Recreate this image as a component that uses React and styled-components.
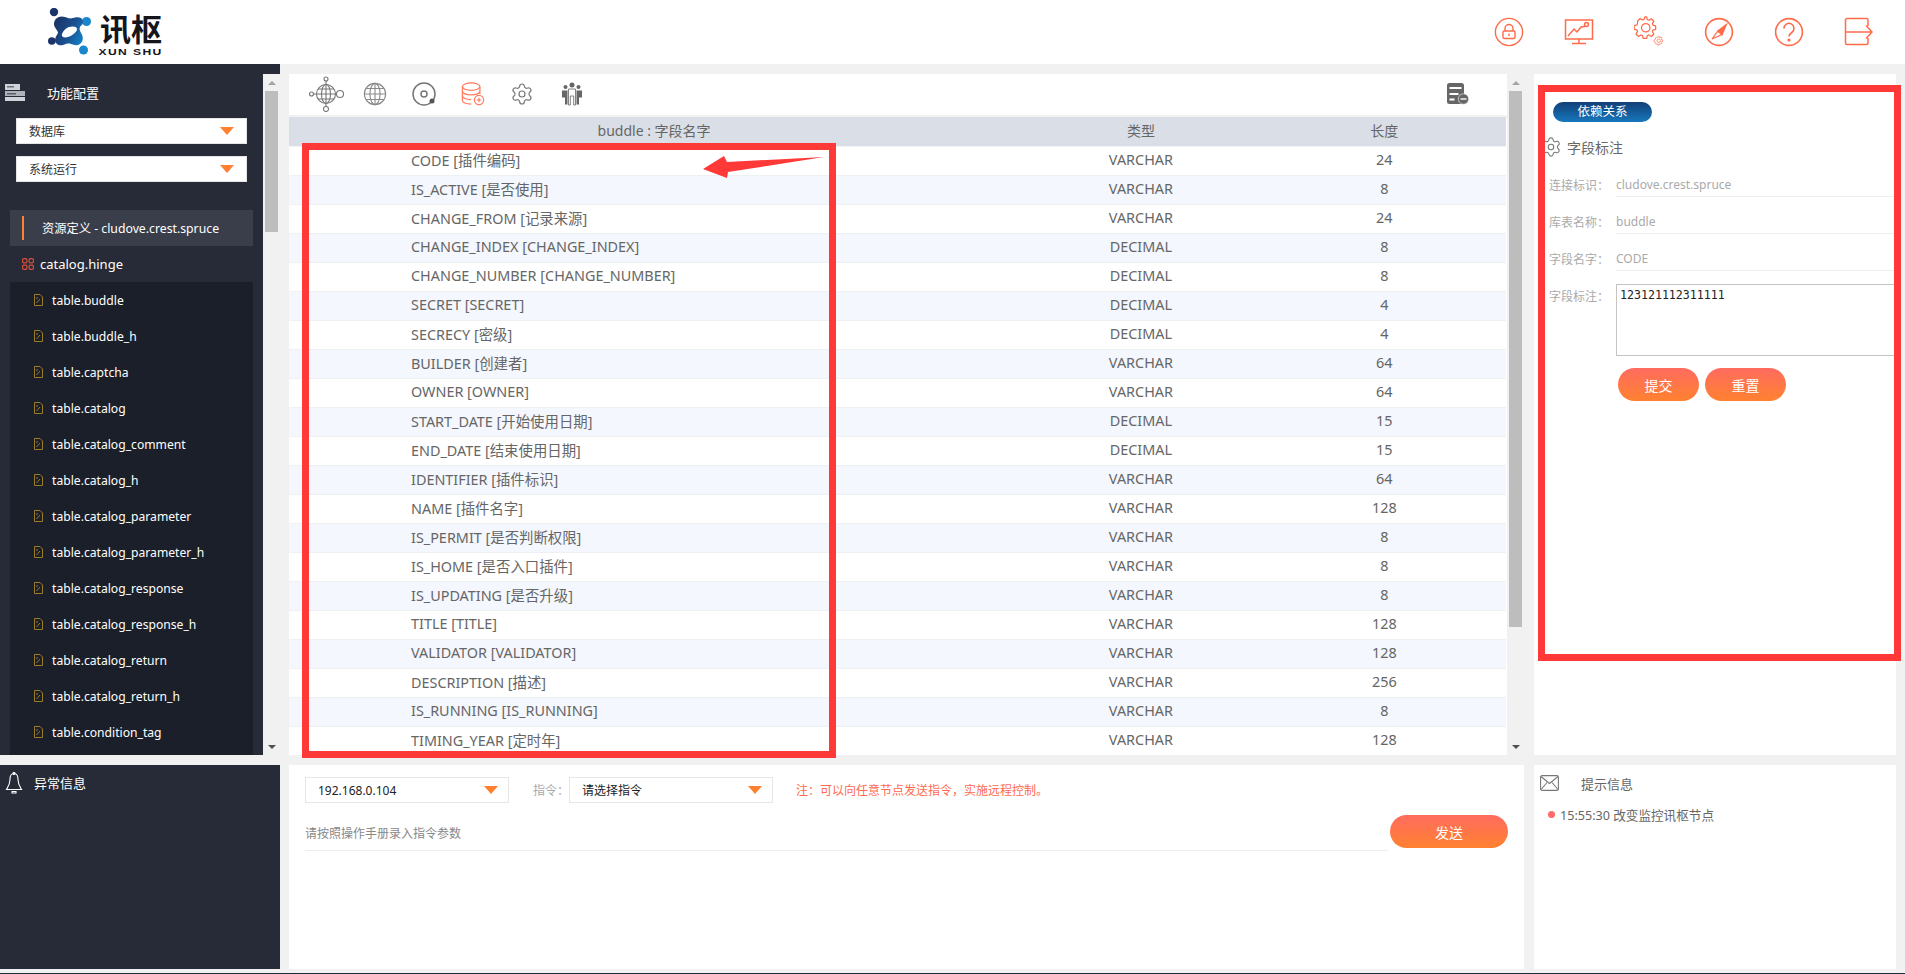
import React from "react"
import styled, { createGlobalStyle } from "styled-components"
import { Settings } from "lucide-react"

const FONT = `"Noto Sans", "Noto Sans CJK SC", sans-serif`

const GlobalStyle = createGlobalStyle`
  html, body {
    margin: 0;
    padding: 0;
    background: #f1f1f1;
    font-family: ${FONT};
    overflow: hidden;
  }
  * { box-sizing: border-box; }
`

const Page = styled.div`
  position: relative;
  width: 1905px;
  height: 974px;
  display: flex;
  flex-direction: column;
  background: #f1f1f1;
  overflow: hidden;
`

const Header = styled.header`
  height: 64px;
  flex: none;
  background: #fff;
  display: flex;
  align-items: center;
  justify-content: space-between;
  padding: 0 31px 0 48px;
`

const Logo = styled.div`
  display: flex;
  align-items: center;
  gap: 8px;
`

const LogoWords = styled.div`
  display: flex;
  flex-direction: column;
  align-items: center;
  color: #15151c;
  line-height: 1;
  margin-top: 5px;
`

const LogoCn = styled.span`
  font-size: 31px;
  font-weight: 700;
  height: 33px;
  line-height: 33px;
`

const LogoEn = styled.span`
  display: inline-block;
  font-family: "Liberation Sans", sans-serif;
  font-size: 8.5px;
  font-weight: 700;
  letter-spacing: 1px;
  white-space: nowrap;
  margin-top: 2px;
  transform: scaleX(1.42);
`

const HeaderIcons = styled.nav`
  display: flex;
  align-items: center;
  gap: 40px;
  svg { display: block; }
`

const Workspace = styled.div`
  flex: none;
  display: grid;
  grid-template-columns: 280px 1245px 371px;
  grid-template-rows: 691px 204px;
  row-gap: 10px;
  width: 1905px;
`

const Sidebar = styled.aside`
  background: #272b37;
  display: flex;
  height: 691px;
`

const SideBody = styled.div`
  width: 263px;
  display: flex;
  flex-direction: column;
  overflow: hidden;
`

const SideTitle = styled.div`
  height: 54px;
  padding: 2px 0 0 5px;
  display: flex;
  align-items: center;
  color: #fff;
  font-size: 13px;
  span { margin-left: 22px; }
`

const SideSelect = styled.div`
  height: 26px;
  margin: 0 16px 12px;
  background: #fff;
  border: 1px solid #e5e5e5;
  color: #333;
  font-size: 12px;
  display: flex;
  align-items: center;
  justify-content: space-between;
  padding: 0 12px;
`

const Caret = styled.i`
  display: block;
  width: 0;
  height: 0;
  border-left: 7.5px solid transparent;
  border-right: 7.5px solid transparent;
  border-top: 8px solid #ff8030;
`

const ActiveRow = styled.div`
  height: 36px;
  margin: 16px 10px 0;
  background: #3a3e4b;
  color: #fff;
  font-size: 12.25px;
  display: flex;
  align-items: center;
  padding-left: 12px;
  white-space: nowrap;
  &::before {
    content: "";
    width: 2px;
    height: 24px;
    background: #ff8030;
    margin-right: 18px;
  }
`

const GroupRow = styled.div`
  height: 36px;
  margin: 0 10px;
  padding-left: 12px;
  display: flex;
  align-items: center;
  gap: 6px;
  color: #fff;
  font-size: 13px;
`

const TreeList = styled.ul`
  flex: 1;
  margin: 0 10px;
  padding: 0 0 0 24px;
  list-style: none;
  background: #1b1f29;
`

const TreeItem = styled.li`
  height: 36px;
  display: flex;
  align-items: center;
  gap: 9px;
  color: #fff;
  font-size: 12.15px;
  white-space: nowrap;
`

const Track = styled.div`
  flex: none;
  width: 17px;
  margin-top: ${p => p.$top || 0}px;
  background: #f1f1f1;
  display: flex;
  flex-direction: column;
  align-items: center;
`

const ArrowBox = styled.div`
  height: 17px;
  flex: none;
  display: flex;
  align-items: center;
  justify-content: center;
  &::before {
    content: "";
    border-left: 4px solid transparent;
    border-right: 4px solid transparent;
    ${p => p.$down
      ? "border-top: 4px solid #505050;"
      : "border-bottom: 4px solid #a3a3a3;"}
  }
`

const Thumb = styled.div`
  width: 13px;
  height: ${p => p.$h}px;
  flex: none;
  background: #bdbdbd;
`

const Grow = styled.div`
  flex: 1;
`

const Scrollbar = ({ thumb, top }) => (
  <Track $top={top}>
    <ArrowBox />
    <Thumb $h={thumb} />
    <Grow />
    <ArrowBox $down />
  </Track>
)

const MainCol = styled.section`
  padding: 10px 0 0 9px;
  height: 691px;
  display: flex;
`

const MainBody = styled.div`
  width: 1218px;
  background: #fff;
  display: flex;
  flex-direction: column;
  overflow: hidden;
`

const Toolbar = styled.div`
  height: 43px;
  flex: none;
  display: flex;
  align-items: center;
  padding: 0 24px 2px 12px;
  background: #fff;
  border-bottom: 2px solid #f1f1f1;
`

const ToolSlot = styled.div`
  width: 49.2px;
  display: flex;
  justify-content: center;
  svg { display: block; }
  &:last-child { margin-left: auto; }
`

const FieldTable = styled.table`
  width: 1217px;
  border-collapse: collapse;
  table-layout: fixed;
  font-size: 14.4px;
  color: #666;
  th {
    height: 29px;
    background: #d9dee7;
    border-bottom: 1px solid #f1f3f7;
    font-weight: 400;
    font-size: 14px;
    color: #666;
    padding: 0 0 2px;
    width: 20%;
  }
  th:first-child { width: 60%; }
  td {
    height: 29px;
    padding: 0 0 2px;
    text-align: center;
    border-bottom: 1px solid #eef0f4;
    white-space: nowrap;
  }
  td:first-child { text-align: left; padding-left: 122px; }
  tbody tr:nth-child(even) { background: #f4f7fd; }
`

const RightCol = styled.section`
  margin-top: 10px;
  margin-left: 9px;
  background: #fff;
  padding: 28px 0 0 15px;
  height: 681px;
  width: 362px;
  overflow: hidden;
`

const DepTag = styled.div`
  width: 99px;
  height: 20px;
  border-radius: 10px;
  background: linear-gradient(180deg, #123f78, #1778bd);
  color: #fff;
  font-size: 12.5px;
  line-height: 20px;
  text-align: center;
  margin-left: 4px;
`

const NoteTitle = styled.div`
  display: flex;
  align-items: center;
  gap: 5px;
  height: 24px;
  margin: 13px 0 8px -9px;
  font-size: 14px;
  color: #666;
  svg { display: block; }
`

const FormRow = styled.div`
  display: flex;
  height: 37px;
  font-size: 12px;
  color: #aaa;
`

const FormLabel = styled.div`
  width: 67px;
  flex: none;
  padding-top: 9px;
  white-space: nowrap;
`

const FormValue = styled.div`
  flex: 1;
  height: 30px;
  padding-top: 9px;
  margin-right: -10px;
  border-bottom: 1px solid #eeeeee;
`

const NoteBox = styled.div`
  flex: 1;
  height: 72px;
  margin: 6px -10px 0 0;
  padding: 3px 0 0 3px;
  border: 1px solid #c4c4c4;
  font-family: "DejaVu Sans Mono", monospace;
  font-size: 11.6px;
  color: #222;
`

const FormButtons = styled.div`
  display: flex;
  gap: 6px;
  margin: 53px 0 0 69px;
`

const PillButton = styled.button`
  width: ${p => p.$w || 81}px;
  height: 33px;
  flex: none;
  border: 0;
  padding: 0;
  border-radius: 17px;
  background: linear-gradient(180deg, #ff6c60, #ff8130);
  color: #fff;
  font-family: ${FONT};
  font-size: 14px;
`

const AlertPanel = styled.div`
  background: #272b37;
  color: #fff;
  font-size: 13px;
  display: flex;
  align-items: flex-start;
  gap: 11px;
  padding: 7px 0 0 5px;
  span { line-height: 22px; }
`

const CommandPanel = styled.div`
  margin-left: 9px;
  width: 1235px;
  background: #fff;
  padding: 12px 16px 0;
`

const CommandRow = styled.div`
  display: flex;
  align-items: center;
  height: 26px;
`

const CmdSelect = styled.div`
  width: 204px;
  height: 26px;
  border: 1px solid #e6e6e6;
  background: #fff;
  color: #222;
  font-size: 12px;
  display: flex;
  align-items: center;
  justify-content: space-between;
  padding: 0 10px 0 12px;
`

const CmdLabel = styled.span`
  color: #aaa;
  font-size: 12px;
  width: 36px;
  margin-left: 24px;
  white-space: nowrap;
`

const CmdNote = styled.span`
  color: #ff6a50;
  font-size: 12px;
  margin-left: 23px;
`

const CommandInput = styled.div`
  display: flex;
  align-items: flex-start;
  gap: 2px;
  margin-top: 12px;
`

const ParamLine = styled.div`
  width: 1083px;
  height: 36px;
  padding-top: 9px;
  border-bottom: 1px solid #eeeeee;
  color: #888;
  font-size: 12px;
`

const TipPanel = styled.div`
  margin-left: 9px;
  width: 362px;
  background: #fff;
  padding: 7px 0 0 6px;
  color: #666;
`

const TipTitle = styled.div`
  display: flex;
  align-items: center;
  gap: 22px;
  height: 22px;
  font-size: 13px;
`

const TipLine = styled.div`
  display: flex;
  align-items: center;
  gap: 5px;
  margin: 11px 0 0 8px;
  font-size: 12.6px;
  &::before {
    content: "";
    width: 7px;
    height: 7px;
    border-radius: 50%;
    background: #ff6b6b;
  }
`

const BottomEdge = styled.div`
  position: absolute;
  left: 0;
  right: 0;
  bottom: 0;
  height: 1px;
  background: #1e2b3a;
`

// the red marks drawn on top of the screenshot
const RedFrame = styled.div`
  position: absolute;
  left: ${p => p.$x}px;
  top: ${p => p.$y}px;
  width: ${p => p.$w}px;
  height: ${p => p.$h}px;
  border: 7px solid #ff3838;
  pointer-events: none;
`

const RedArrow = styled.svg`
  position: absolute;
  left: 700px;
  top: 150px;
`

const O = "#ff6b4a"

const LogoMark = () => (
  <svg width="44" height="48" viewBox="0 0 44 48">
    <defs>
      <linearGradient id="lg" x1="0" y1="0.25" x2="1" y2="0.75">
        <stop offset="0" stopColor="#1b3468" />
        <stop offset="0.55" stopColor="#1a4f8e" />
        <stop offset="1" stopColor="#1280c6" />
      </linearGradient>
    </defs>
    <circle cx="6" cy="4" r="4.2" fill="#1c3468" />
    <circle cx="3.800" cy="33" r="3.800" fill="#1c3468" />
    <circle cx="38.500" cy="13.500" r="4.500" fill="#1a86cb" />
    <circle cx="35.500" cy="42" r="4.500" fill="#1a86cb" />
    <path
      fill="url(#lg)"
      fillRule="evenodd"
      d="M6 16c0-6 6-9 11-7 3 1 5 2 8 1 3-1 9-2 10 3 1 3-2 4-3 6-1 2 0 4 1 6 3 4 2 9-1 11-3 2-6 1-9 0-3-1-5 0-8 1-4 1-8-1-8-5 0-3 2-5 3-7 0-3-4-5-4-9zM14 26c-1 3 2 4 6 3 4-1 9-5 9-8 0-3-5-3-8-2-3 1-6 4-7 7z"
    />
  </svg>
)

const Lock = () => (
  <svg width="30" height="30" viewBox="0 0 30 30" fill="none" stroke={O} strokeWidth="1.4">
    <circle cx="15" cy="15" r="13.6" />
    <rect x="9" y="14" width="12" height="7.5" rx="1.2" />
    <path d="M11 14v-2.5a4 4 0 0 1 8 0V14M15 16.5v2.5" />
  </svg>
)

const Monitor = () => (
  <svg width="30" height="30" viewBox="0 0 30 30" fill="none" stroke={O} strokeWidth="1.5">
    <rect x="1.500" y="3" width="27" height="19" />
    <path d="M15 22v4.500M8 26.500h14" />
    <path d="M4 19l6-7 3 3 4-5 3.500-.5 2.500-2" />
    <circle cx="22.500" cy="7.500" r="2" fill="#fff" />
  </svg>
)

const GearPath = "M12.9 1h2.2l.7 3.2 2 .8 2.8-1.8 3 3-1.8 2.8.8 2 3.2.7v4.2l-3.2.7-.8 2 1.8 2.8-3 3-2.8-1.8-2 .8-.7 3.2h-4.2l-.7-3.2-2-.8-2.8 1.8-3-3 1.8-2.8-.8-2-3.2-.7V11.4l3.2-.7.8-2L4.300 5.900l3-3 2.800 1.800 2-.8z"

const SettingsGear = () => (
  <svg width="30" height="32" viewBox="0 0 30 32" fill="none" stroke={O} strokeLinejoin="round">
    <g transform="scale(0.84)">
      <path d={GearPath} strokeWidth="1.5" />
      <circle cx="14" cy="14" r="5" strokeWidth="1.5" />
    </g>
    <g transform="translate(20 20) scale(0.34)" opacity="0.8">
      <path d={GearPath} strokeWidth="2.5" />
      <circle cx="14" cy="14" r="5" strokeWidth="2.5" />
    </g>
  </svg>
)

const Compass = () => (
  <svg width="30" height="30" viewBox="0 0 30 30" fill="none" stroke={O} strokeWidth="1.6">
    <circle cx="15" cy="15" r="13.4" />
    <path d="M22 8l-4 9.500-4-3.500z" fill={O} />
    <path d="M8 22l6-8 4 3.500z" strokeWidth="1.2" />
  </svg>
)

const Question = () => (
  <svg width="30" height="30" viewBox="0 0 30 30" fill="none" stroke={O} strokeWidth="1.6">
    <circle cx="15" cy="15" r="13.4" />
    <path d="M10 11.500a5 5 0 1 1 7.800 4c-1.800 1.200-2.800 2-2.800 4" />
    <circle cx="15" cy="23" r="0.8" fill={O} />
  </svg>
)

const Exit = () => (
  <svg width="30" height="30" viewBox="0 0 30 30" fill="none" stroke={O} strokeWidth="1.5">
    <path d="M24 9V3a1.500 1.500 0 0 0-1.500-1.500H3A1.500 1.500 0 0 0 1.500 3v23A1.500 1.500 0 0 0 3 27.500h19.500A1.500 1.500 0 0 0 24 26v-5" />
    <path d="M1.500 15h26M22 8.500l6 6.500-6 6.500" />
  </svg>
)

const ServerIcon = () => (
  <svg width="20" height="17" viewBox="0 0 20 17">
    <rect x="0" y="0" width="15" height="6" fill="#cfd2d8" />
    <rect x="0" y="7" width="20" height="5" fill="#aeb2ba" />
    <rect x="0" y="13" width="20" height="4" fill="#cfd2d8" />
    <rect x="2" y="2" width="7" height="1.500" fill="#6c707a" />
    <rect x="2" y="9" width="9" height="1.500" fill="#5a5e68" />
  </svg>
)

const GridIcon = () => (
  <svg width="12" height="12" viewBox="0 0 12 12" fill="none" stroke="#d8503c" strokeWidth="1.200">
    <rect x="0.600" y="0.600" width="4.300" height="4.300" rx="1.200" />
    <rect x="7.100" y="0.600" width="4.300" height="4.300" rx="1.200" />
    <rect x="0.600" y="7.100" width="4.300" height="4.300" rx="1.200" />
    <rect x="7.100" y="7.100" width="4.300" height="4.300" rx="1.200" />
  </svg>
)

const FileIcon = () => (
  <svg width="9" height="12" viewBox="0 0 9 12" fill="none" stroke="#9a7b26" strokeWidth="1">
    <path d="M.5.5h5.500l2.500 2.500v8.500h-8z" />
    <path d="M2.500 9l3.500-4M2 4h2" />
  </svg>
)

const Bell = () => (
  <svg width="18" height="23" viewBox="0 0 18 23" fill="none" stroke="#fff" strokeWidth="1.100">
    <path d="M9 1.500c-3 0-4 3-4 6 0 5-1.500 7-3.500 10h15c-2-3-3.500-5-3.500-10 0-3-1-6-4-6z" />
    <path d="M7 19.500h4v1.500H7z" />
    <circle cx="9" cy="1.500" r="1" />
  </svg>
)

const Mail = () => (
  <svg width="19" height="16" viewBox="0 0 19 16" fill="none" stroke="#777" strokeWidth="1.100">
    <rect x="0.600" y="0.600" width="17.800" height="14.800" rx="1.500" />
    <path d="M1 1.500l8.500 7 8.500-7M1 14.500l6-7M18 14.500l-6-7" />
  </svg>
)

const G = "#777"

const NetIcon = () => (
  <svg width="36" height="36" viewBox="0 0 36 36" fill="none" stroke={G} strokeWidth="1.100">
    <circle cx="18" cy="18" r="9.500" />
    <ellipse cx="18" cy="18" rx="4.500" ry="9.500" />
    <path d="M18 8.500v19M8.500 18h19M10 13h16M10 23h16" />
    <circle cx="18" cy="3" r="2" />
    <circle cx="18" cy="33" r="2.500" />
    <circle cx="3.500" cy="18" r="2" />
    <circle cx="32" cy="18" r="3.500" />
    <path d="M18 5v3.500M18 27.500v3M5.500 18h3M27.500 18h1" />
  </svg>
)

const GlobeIcon = () => (
  <svg width="24" height="24" viewBox="0 0 26 26" fill="none" stroke="#8a8a8a" strokeWidth="1.200">
    <circle cx="13" cy="13" r="11.500" />
    <ellipse cx="13" cy="13" rx="5.500" ry="11.500" />
    <path d="M13 1.500v23M1.500 13h23M3.500 7h19M3.500 19h19" />
  </svg>
)

const DiskIcon = () => (
  <svg width="26" height="26" viewBox="0 0 26 26" fill="none" stroke={G} strokeWidth="1.500">
    <circle cx="13" cy="13" r="11" />
    <circle cx="13" cy="13" r="3" />
    <circle cx="21" cy="20" r="2.500" fill="#555" stroke="none" />
  </svg>
)

const DbIcon = () => (
  <svg width="24" height="24" viewBox="0 0 26 26" fill="none" stroke="#ff7a5c" strokeWidth="1.300">
    <ellipse cx="11" cy="5" rx="9.500" ry="4" />
    <path d="M1.500 5v15c0 2.200 4 4 9.500 4M20.500 5v8M1.500 10c0 2.200 4 4 9.500 4s9.500-1.800 9.500-4M1.500 15c0 2.200 4 4 9.500 4" />
    <circle cx="19.500" cy="19.500" r="5" fill="#fff" />
    <path d="M19.500 17v5M17 19.500h5" />
  </svg>
)

const PeopleIcon = () => (
  <svg width="20" height="24" viewBox="0 0 20 24" fill="#666">
    <circle cx="10" cy="3" r="2.500" />
    <circle cx="3.500" cy="5" r="2" />
    <circle cx="16.500" cy="5" r="2" />
    <path d="M0 8.500h5.500v14H3v-7H0zM20 8.500h-5.500v14H17v-7h3z" />
    <path d="M6.500 7h7v16h-1.800v-9h-3.400v9H6.500z" fill="#fff" stroke="#666" strokeWidth="0.800" />
  </svg>
)

const ListMinusIcon = () => (
  <svg width="22" height="22" viewBox="0 0 22 22">
    <rect x="0" y="0" width="17" height="21" rx="2.500" fill="#666" />
    <rect x="2.500" y="4" width="12" height="2" fill="#fff" />
    <rect x="2.500" y="10" width="9" height="2" fill="#fff" />
    <rect x="2.500" y="15.500" width="5" height="2" fill="#fff" />
    <circle cx="16.500" cy="16" r="5.200" fill="#666" stroke="#fff" strokeWidth="0.600" />
    <rect x="13.500" y="15.300" width="6" height="1.400" fill="#fff" />
  </svg>
)

const treeItems = [
  "table.buddle", "table.buddle_h", "table.captcha", "table.catalog",
  "table.catalog_comment", "table.catalog_h", "table.catalog_parameter",
  "table.catalog_parameter_h", "table.catalog_response", "table.catalog_response_h",
  "table.catalog_return", "table.catalog_return_h", "table.condition_tag",
]

const fields = [
  ["CODE [插件编码]", "VARCHAR", 24],
  ["IS_ACTIVE [是否使用]", "VARCHAR", 8],
  ["CHANGE_FROM [记录来源]", "VARCHAR", 24],
  ["CHANGE_INDEX [CHANGE_INDEX]", "DECIMAL", 8],
  ["CHANGE_NUMBER [CHANGE_NUMBER]", "DECIMAL", 8],
  ["SECRET [SECRET]", "DECIMAL", 4],
  ["SECRECY [密级]", "DECIMAL", 4],
  ["BUILDER [创建者]", "VARCHAR", 64],
  ["OWNER [OWNER]", "VARCHAR", 64],
  ["START_DATE [开始使用日期]", "DECIMAL", 15],
  ["END_DATE [结束使用日期]", "DECIMAL", 15],
  ["IDENTIFIER [插件标识]", "VARCHAR", 64],
  ["NAME [插件名字]", "VARCHAR", 128],
  ["IS_PERMIT [是否判断权限]", "VARCHAR", 8],
  ["IS_HOME [是否入口插件]", "VARCHAR", 8],
  ["IS_UPDATING [是否升级]", "VARCHAR", 8],
  ["TITLE [TITLE]", "VARCHAR", 128],
  ["VALIDATOR [VALIDATOR]", "VARCHAR", 128],
  ["DESCRIPTION [描述]", "VARCHAR", 256],
  ["IS_RUNNING [IS_RUNNING]", "VARCHAR", 8],
  ["TIMING_YEAR [定时年]", "VARCHAR", 128],
]

const formRows = [
  ["连接标识：", "cludove.crest.spruce"],
  ["库表名称：", "buddle"],
  ["字段名字：", "CODE"],
]

export default function App() {
  return (
    <Page>
      <GlobalStyle />
      <Header>
        <Logo>
          <LogoMark />
          <LogoWords>
            <LogoCn>讯枢</LogoCn>
            <LogoEn>XUN SHU</LogoEn>
          </LogoWords>
        </Logo>
        <HeaderIcons>
          <Lock />
          <Monitor />
          <SettingsGear />
          <Compass />
          <Question />
          <Exit />
        </HeaderIcons>
      </Header>

      <Workspace>
        <Sidebar>
          <SideBody>
            <SideTitle>
              <ServerIcon />
              <span>功能配置</span>
            </SideTitle>
            <SideSelect>数据库<Caret /></SideSelect>
            <SideSelect>系统运行<Caret /></SideSelect>
            <ActiveRow>资源定义 - cludove.crest.spruce</ActiveRow>
            <GroupRow><GridIcon />catalog.hinge</GroupRow>
            <TreeList>
              {treeItems.map(name => (
                <TreeItem key={name}><FileIcon />{name}</TreeItem>
              ))}
            </TreeList>
          </SideBody>
          <Scrollbar thumb={141} top={10} />
        </Sidebar>

        <MainCol>
          <MainBody>
            <Toolbar>
              <ToolSlot><NetIcon /></ToolSlot>
              <ToolSlot><GlobeIcon /></ToolSlot>
              <ToolSlot><DiskIcon /></ToolSlot>
              <ToolSlot><DbIcon /></ToolSlot>
              <ToolSlot><Settings size={24} strokeWidth={1.2} color={G} /></ToolSlot>
              <ToolSlot><PeopleIcon /></ToolSlot>
              <ToolSlot><ListMinusIcon /></ToolSlot>
            </Toolbar>
            <FieldTable>
              <thead>
                <tr>
                  <th>buddle : 字段名字</th>
                  <th>类型</th>
                  <th>长度</th>
                </tr>
              </thead>
              <tbody>
                {fields.map(([name, type, len]) => (
                  <tr key={name}>
                    <td>{name}</td>
                    <td>{type}</td>
                    <td>{len}</td>
                  </tr>
                ))}
              </tbody>
            </FieldTable>
          </MainBody>
          <Scrollbar thumb={536} />
        </MainCol>

        <RightCol>
          <DepTag>依赖关系</DepTag>
          <NoteTitle>
            <Settings size={22} strokeWidth={1.2} color="#777" />
            字段标注
          </NoteTitle>
          {formRows.map(([label, value]) => (
            <FormRow key={label}>
              <FormLabel>{label}</FormLabel>
              <FormValue>{value}</FormValue>
            </FormRow>
          ))}
          <FormRow>
            <FormLabel>字段标注：</FormLabel>
            <NoteBox>123121112311111</NoteBox>
          </FormRow>
          <FormButtons>
            <PillButton>提交</PillButton>
            <PillButton>重置</PillButton>
          </FormButtons>
        </RightCol>

        <AlertPanel>
          <Bell />
          <span>异常信息</span>
        </AlertPanel>

        <CommandPanel>
          <CommandRow>
            <CmdSelect>192.168.0.104<Caret /></CmdSelect>
            <CmdLabel>指令：</CmdLabel>
            <CmdSelect>请选择指令<Caret /></CmdSelect>
            <CmdNote>注：可以向任意节点发送指令，实施远程控制。</CmdNote>
          </CommandRow>
          <CommandInput>
            <ParamLine>请按照操作手册录入指令参数</ParamLine>
            <PillButton $w={118}>发送</PillButton>
          </CommandInput>
        </CommandPanel>

        <TipPanel>
          <TipTitle><Mail />提示信息</TipTitle>
          <TipLine>15:55:30 改变监控讯枢节点</TipLine>
        </TipPanel>
      </Workspace>

      <BottomEdge />
      <RedFrame $x={302} $y={143} $w={534} $h={615} />
      <RedFrame $x={1538} $y={85} $w={363} $h={576} />
      <RedArrow width="130" height="30" viewBox="0 0 130 30">
        <path d="M3 19L24 6l3 6 97-5-96 15-1 6z" fill="#ff3838" />
      </RedArrow>
    </Page>
  )
}
